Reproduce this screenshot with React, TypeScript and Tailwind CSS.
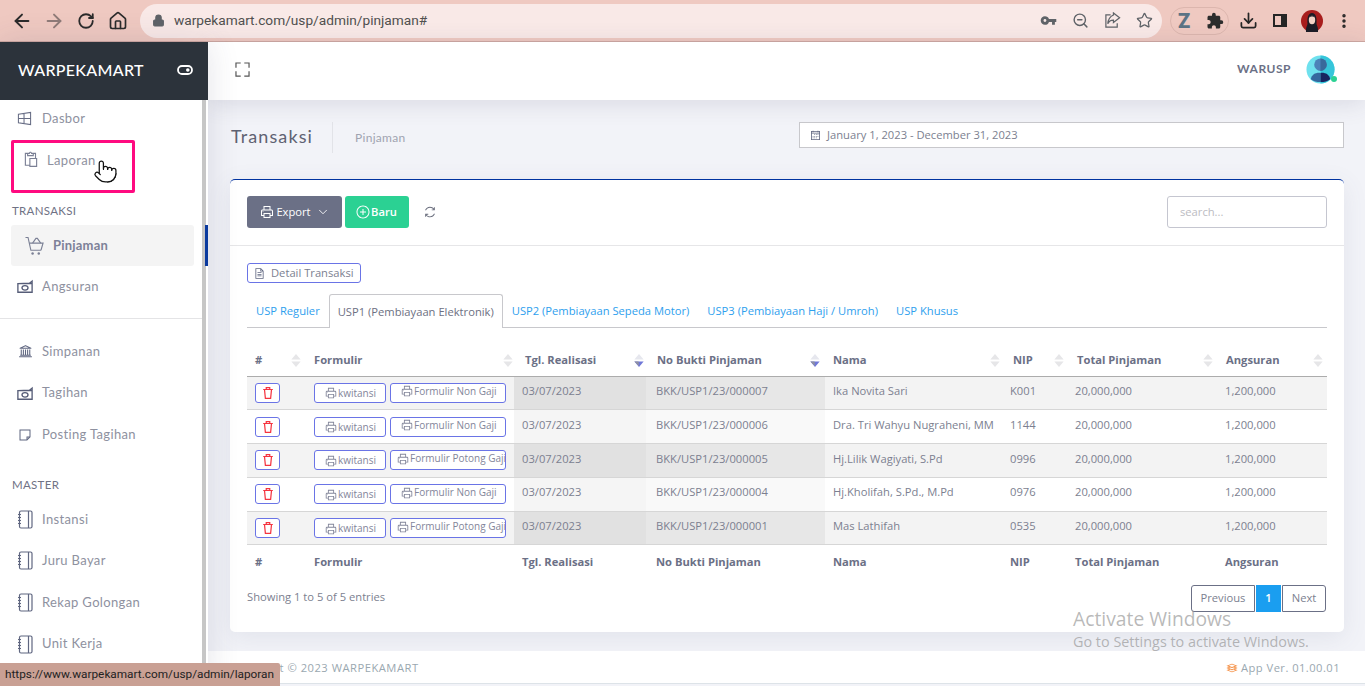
import type { ReactNode } from "react";
import { ArrowLeft, ArrowRight, RotateCw, Home, Lock, ZoomOut, Star, Download, EllipsisVertical, Pointer, ChevronDown } from "lucide-react";
import { MdExtension, MdVpnKey } from "react-icons/md";
import {
  LiaPrintSolid,
  LiaUniversitySolid,
  LiaStickyNote,
  LiaPasteSolid,
  LiaFileAlt,
  LiaPlusCircleSolid,
  LiaSyncSolid,
  LiaExpandSolid,
  LiaLayerGroupSolid,
  LiaCalendar,
} from "react-icons/lia";

const ROWS = [
  { form: "Formulir Non Gaji", bukti: "BKK/USP1/23/000007", nama: "Ika Novita Sari", nip: "K001" },
  { form: "Formulir Non Gaji", bukti: "BKK/USP1/23/000006", nama: "Dra. Tri Wahyu Nugraheni, MM", nip: "1144" },
  { form: "Formulir Potong Gaji", bukti: "BKK/USP1/23/000005", nama: "Hj.Lilik Wagiyati, S.Pd", nip: "0996" },
  { form: "Formulir Non Gaji", bukti: "BKK/USP1/23/000004", nama: "Hj.Kholifah, S.Pd., M.Pd", nip: "0976" },
  { form: "Formulir Potong Gaji", bukti: "BKK/USP1/23/000001", nama: "Mas Lathifah", nip: "0535" },
];

const HEADERS = [
  { label: "#", pad: "pl-2 pr-[5px]", active: false },
  { label: "Formulir", pad: "pl-2 pr-[1px]", active: false },
  { label: "Tgl. Realisasi", pad: "pl-[11px] pr-[2px]", active: true },
  { label: "No Bukti Pinjaman", pad: "pl-[11px] pr-[5px]", active: true },
  { label: "Nama", pad: "pl-2 pr-[2px]", active: false },
  { label: "NIP", pad: "pl-[11px] pr-[3px]", active: false },
  { label: "Total Pinjaman", pad: "pl-[10px] pr-[4px]", active: false },
  { label: "Angsuran", pad: "pl-[9px] pr-[4px]", active: false },
];

const TABS = [
  "USP Reguler",
  "USP1 (Pembiayaan Elektronik)",
  "USP2 (Pembiayaan Sepeda Motor)",
  "USP3 (Pembiayaan Haji / Umroh)",
  "USP Khusus",
];

function WindowIcon() {
  return (
    <svg viewBox="0 0 16 16" className="h-[15px] w-[15px]" fill="none" stroke="#666c84" strokeWidth="1.1">
      <path d="M1.500 3.500 14.500 1.500v13l-13-2zM1.500 8h13M7.500 2.600v10.800" />
    </svg>
  );
}

function MoneyIcon() {
  return (
    <svg viewBox="0 0 18 15" className="h-[15px] w-[16px]" fill="none" stroke="#565d78" strokeWidth="1.5">
      <path d="M1 4.200 14 3.800l3-2.300v2.700M1 4.200V14h16V4.200H1z" />
      <ellipse cx="9" cy="9" rx="3.400" ry="2.500" />
    </svg>
  );
}

function CartIcon() {
  return (
    <svg viewBox="0 0 20 20" className="h-[20px] w-[19px]" fill="none" stroke="#7b8095" strokeWidth="1.2">
      <path d="M.5 1h2.700l3 13.500h10.600" />
      <path d="M4.500 7H19l-2.200 7.500" />
      <path d="M8 7l3.500-5h1.500L16.500 7" />
      <circle cx="8" cy="18" r="1.300" fill="#7b8095" stroke="none" />
      <circle cx="14.500" cy="18" r="1.300" fill="#7b8095" stroke="none" />
    </svg>
  );
}

function NotebookIcon() {
  return (
    <svg viewBox="0 0 16 19" className="h-[19px] w-[16px]" fill="none" stroke="#5f6680" strokeWidth="1.2">
      <rect x="2.500" y="1" width="12.500" height="17" rx="1.500" />
      <path d="M11.500 1v17" />
      <path d="M1 4.500h3M1 7.500h3M1 10.500h3M1 13.500h3" />
    </svg>
  );
}

function TrashIcon() {
  return (
    <svg viewBox="0 0 16 16" className="h-[14px] w-[14px]" fill="none" stroke="#f5333f" strokeWidth="1.400">
      <path d="M2.500 4h11M6 4V1.800h4V4M4 4l1 10.200h6L12 4" />
    </svg>
  );
}

function SortIcon({ active }: { active: boolean }) {
  return (
    <svg viewBox="0 0 12 14" className="h-[13px] w-[12px] shrink-0">
      <path d="M6 0 11 6H1z" fill={active ? "#e6e7ee" : "#e6e6e8"} />
      <path d="M6 14 1 8h10z" fill={active ? "#7078d8" : "#e6e6e8"} />
      {active && <path d="M1 8h4.500L6 13z" fill="#8f919f" />}
    </svg>
  );
}

function ShareIcon() {
  return (
    <svg viewBox="0 0 18 18" className="h-[17px] w-[17px]" fill="none" stroke="#5f6368" strokeWidth="1.3">
      <path d="M7 3H2v13h12v-4M10 3.200V1l6.500 5-6.500 5V8.500C7 8.500 5 10 4 12.500 4.300 7.500 6.500 4.800 10 3.200z" />
    </svg>
  );
}

function ProfilePic() {
  return (
    <svg viewBox="0 0 22 22" className="h-[22px] w-[22px]">
      <circle cx="11" cy="11" r="11" fill="#a81d1d" />
      <path d="M5 22c-.5-4 1-6 1.500-8C6 8 7 3 11 3s5 5 4.500 11c.5 2 2 4 1.500 8z" fill="#1c1c26" />
      <ellipse cx="11" cy="10" rx="3.200" ry="4.200" fill="#f2d2c6" />
      <path d="M7.800 8c1-2 5.400-2 6.400 0-1-3.500-5.400-3.500-6.400 0z" fill="#1c1c26" />
    </svg>
  );
}

function Avatar() {
  return (
    <svg viewBox="0 0 30 30" className="h-[29px] w-[29px]">
      <circle cx="15" cy="15" r="14.500" fill="#6fe1ee" />
      <path d="M15 .5A14.500 14.500 0 0 1 29.500 15 14.500 14.500 0 0 1 15 29.500z" fill="#36c5da" />
      <circle cx="15" cy="10" r="6.500" fill="#4c82b8" />
      <path d="M15 3.500a6.500 6.500 0 0 1 0 13z" fill="#39699b" />
      <path d="M5 25c1-5 5-7 10-6.500V28C11 28 7.500 27 5 25z" fill="#35689e" />
      <path d="M25 25c-1-5-5-7-10-6.500V28c4 0 7.500-1 10-3z" fill="#18235f" />
    </svg>
  );
}

function NavItem({ icon, label, indent }: { icon: ReactNode; label: string; indent?: boolean }) {
  return (
    <a
      className={`flex h-[41.6px] items-center text-[13px] tracking-[0.35px] text-[#8e91a0] ${
        indent ? "pl-[22px]" : "pl-[17px]"
      }`}
    >
      <span className={`flex w-[25px] shrink-0 items-center ${indent ? "-translate-y-px" : ""}`}>{icon}</span>
      {label}
    </a>
  );
}

function Sidebar() {
  return (
    <aside className="relative z-20 flex w-[208px] shrink-0 flex-col bg-white font-['Lato',sans-serif] shadow-[0_0_30px_rgba(60,60,90,0.14)]">
      <div className="flex h-[58px] items-center justify-between bg-[#2c333b] pb-[3px] pl-[18px] pr-[15px] text-white">
        <span className="text-[16px] font-medium tracking-[0.3px]">WARPEKAMART</span>
        <svg viewBox="0 0 16 10" className="h-[10px] w-[16px]" fill="none" stroke="#fff" strokeWidth="1.800">
          <rect x="1" y="1" width="14" height="8" rx="4" />
          <circle cx="10.800" cy="5" r="1.800" fill="#fff" stroke="none" />
        </svg>
      </div>

      <div className="flex min-h-0 flex-1">
        <nav className="w-[202px] shrink-0 overflow-hidden">
          <div className="-mt-[2px]">
            <NavItem icon={<WindowIcon />} label="Dasbor" />
            <NavItem icon={<LiaPasteSolid size={18} color="#7b8095" />} label="Laporan" indent />
          </div>
          <div className="mt-[23px] pl-3 text-[11.5px] leading-[14px] tracking-[0.3px] text-[#6f7285]">TRANSAKSI</div>
          <div className="ml-[11px] mt-[7px] flex h-[41px] w-[183px] items-center rounded-[3px] bg-[#f4f4f4] pl-[14px] text-[13px] font-bold tracking-[0.2px] text-[#7d8198]">
            <span className="w-[28px] shrink-0">
              <CartIcon />
            </span>
            Pinjaman
          </div>
          <NavItem icon={<MoneyIcon />} label="Angsuran" />
          <div className="mt-[10px] h-px w-[208px] bg-[#e4e4e6]" />
          <div className="mt-[12px]">
            <NavItem icon={<LiaUniversitySolid size={17} color="#5f6680" />} label="Simpanan" />
            <NavItem icon={<MoneyIcon />} label="Tagihan" />
            <NavItem icon={<LiaStickyNote size={16} color="#5f6680" />} label="Posting Tagihan" />
          </div>
          <div className="mt-[22px] pl-3 text-[11.5px] leading-[14px] tracking-[0.3px] text-[#6f7285]">MASTER</div>
          <div className="mt-[7px]">
            {["Instansi", "Juru Bayar", "Rekap Golongan", "Unit Kerja"].map((m) => (
              <NavItem key={m} icon={<NotebookIcon />} label={m} />
            ))}
          </div>
        </nav>
        <div className="w-[4px] shrink-0 bg-[#c6c6c6]" />
        <div className="flex w-[2px] shrink-0 flex-col bg-white pt-[125px]">
          <div className="-ml-px h-[41px] w-[3px] bg-[#0b3a9e]" />
        </div>
      </div>
    </aside>
  );
}

function RowButton({ children, className }: { children: ReactNode; className: string }) {
  return (
    <button
      className={`flex h-[20px] items-center overflow-hidden whitespace-nowrap rounded-[3px] border border-[#6a74e6] bg-white text-[10px] text-[#83869a] ${className}`}
    >
      {children}
    </button>
  );
}

function DataTable() {
  return (
    <table className="mt-[17px] w-[1080px] table-fixed border-collapse text-[11.2px] text-[#7c7f90]">
      <colgroup>
        <col className="w-[59px]" />
        <col className="w-[208px]" />
        <col className="w-[132px]" />
        <col className="w-[179px]" />
        <col className="w-[177px]" />
        <col className="w-[65px]" />
        <col className="w-[150px]" />
        <col className="w-[110px]" />
      </colgroup>
      <thead>
        <tr className="h-[31px] border-b-[1.5px] border-[#acacac]">
          {HEADERS.map((h) => (
            <th key={h.label} className={`font-bold text-[#6b7086] ${h.pad}`}>
              <div className="-mr-[2px] flex items-center justify-between pr-[1px] text-left">
                <span>{h.label}</span>
                <SortIcon active={h.active} />
              </div>
            </th>
          ))}
        </tr>
      </thead>
      <tbody>
        {ROWS.map((r, i) => {
          const odd = i % 2 === 0;
          return (
            <tr key={r.bukti} className={`h-[33.8px] border-b border-[#d6d6d6] ${odd ? "bg-[#f3f3f3]" : "bg-white"}`}>
              <td className="pl-2 align-middle">
                <button className="flex h-[20px] w-[25px] items-center justify-center rounded-[3px] border border-[#6a74e6] bg-white">
                  <TrashIcon />
                </button>
              </td>
              <td className="pl-2 align-middle">
                <div className="flex gap-1">
                  <RowButton className="w-[72px] justify-center pt-px">
                    <LiaPrintSolid size={14} className="shrink-0" />
                    kwitansi
                  </RowButton>
                  <RowButton className={`w-[116px] pb-[3px] ${r.form === "Formulir Non Gaji" ? "pl-[9px]" : "pl-[5px]"}`}>
                    <LiaPrintSolid size={14} className="shrink-0" />
                    {r.form}
                  </RowButton>
                </div>
              </td>
              <td className={`pb-[3px] pl-2 ${odd ? "bg-[#e1e1e1]" : "bg-[#f5f5f5]"}`}>03/07/2023</td>
              <td className={`pb-[3px] pl-[10px] ${odd ? "bg-[#e7e7e7]" : "bg-[#f9f9f9]"}`}>{r.bukti}</td>
              <td className="whitespace-nowrap pb-[3px] pl-2">{r.nama}</td>
              <td className="pb-[3px] pl-2">{r.nip}</td>
              <td className="pb-[3px] pl-2">20,000,000</td>
              <td className="pb-[3px] pl-2">1,200,000</td>
            </tr>
          );
        })}
      </tbody>
      <tfoot>
        <tr className="h-[34px] text-left font-bold text-[#6b7086]">
          <th className="pl-2">#</th>
          <th className="pl-2">Formulir</th>
          <th className="pl-2">Tgl. Realisasi</th>
          <th className="pl-[10px]">No Bukti Pinjaman</th>
          <th className="pl-2">Nama</th>
          <th className="pl-2">NIP</th>
          <th className="pl-2">Total Pinjaman</th>
          <th className="pl-2">Angsuran</th>
        </tr>
      </tfoot>
    </table>
  );
}

function Card() {
  return (
    <section className="rounded-[5px] border-t border-[#0033a0] bg-white font-['Open_Sans',sans-serif] shadow-[0_6px_24px_rgba(90,95,130,0.1)]">
      <div className="flex h-[66px] items-center border-b border-[#e6e6e8] px-[17px] pb-[2px]">
        <button className="flex h-[32px] w-[95px] items-center justify-center gap-[1px] rounded-[3px] bg-[#6b7086] pt-px text-[11.2px] font-medium text-white">
          <LiaPrintSolid size={16} />
          Export
          <ChevronDown size={14} strokeWidth={1.5} className="ml-[4px]" />
        </button>
        <button className="ml-[3px] flex h-[32px] w-[64px] items-center justify-center rounded-[3px] bg-[#2bd193] pr-[2px] pt-px text-[11.2px] font-semibold text-white">
          <LiaPlusCircleSolid size={16} />
          Baru
        </button>
        <LiaSyncSolid size={14} color="#666a7a" className="ml-[14px]" />
        <input
          placeholder="search..."
          className="ml-auto h-[32px] w-[160px] rounded-[3px] border border-[#c5c6d0] px-3 text-[11.2px] outline-none placeholder:text-[#bcbcc2]"
        />
      </div>

      <div className="px-[17px] pb-5 pt-[17px]">
        <button className="flex h-[20px] w-[114px] items-center rounded-[3px] border border-[#6a74e6] pl-[5px] text-[11.2px] text-[#7c7f90]">
          <LiaFileAlt size={13} color="#5f6680" className="mr-[5px] shrink-0" />
          Detail Transaksi
        </button>

        <div className="mt-[11px] flex h-[34px] border-b border-[#c8c8cc] text-[11.2px]">
          {TABS.map((t, i) =>
            i === 1 ? (
              <span
                key={t}
                className="-mb-px flex w-[174px] items-center justify-center rounded-t-[3px] border border-b-0 border-[#c8c8cc] bg-white pt-px text-[#6d7082]"
              >
                {t}
              </span>
            ) : (
              <span key={t} className="flex items-center whitespace-nowrap px-[9px] pt-[2px] text-[#2ea0ee]">
                {t}
              </span>
            ),
          )}
        </div>

        <DataTable />

        <div className="mt-[6px] flex items-start justify-between pr-px text-[11.2px] text-[#7c7f90]">
          <span className="pt-[4px]">Showing 1 to 5 of 5 entries</span>
          <div className="flex h-[27px] gap-px">
            <span className="flex w-[64px] items-center justify-center rounded-l-[3px] border border-[#6b7086]">Previous</span>
            <span className="flex w-[25px] items-center justify-center bg-[#1a9ef0] font-semibold text-white">1</span>
            <span className="flex w-[44px] items-center justify-center rounded-r-[3px] border border-[#6b7086]">Next</span>
          </div>
        </div>
      </div>
    </section>
  );
}

function BrowserBar() {
  return (
    <div className="flex h-[42px] shrink-0 items-center border-b border-[#cfa9a2] bg-[#efc9c1] font-['Roboto',sans-serif]">
      <div className="flex w-[140px] shrink-0 items-center pl-[6px] text-[#2b2b2b]">
        <span className="flex w-[32px] justify-center">
          <ArrowLeft size={22} strokeWidth={2.1} />
        </span>
        <span className="flex w-[32px] justify-center text-[#8f7b78]">
          <ArrowRight size={22} strokeWidth={2.1} />
        </span>
        <span className="flex w-[32px] justify-center">
          <RotateCw size={18} strokeWidth={2.4} />
        </span>
        <span className="flex w-[32px] justify-center">
          <Home size={20} strokeWidth={2} />
        </span>
      </div>
      <div className="flex h-[34px] w-[1022px] shrink-0 items-center rounded-full bg-[#f9e9e7] pl-[12px] pr-[2px]">
        <Lock size={13} className="fill-[#5f6368] text-[#5f6368]" />
        <span className="ml-[9px] text-[13.7px] text-[#50504f]">warpekamart.com/usp/admin/pinjaman#</span>
        <div className="ml-auto flex items-center text-[#5f6368]">
          <span className="flex w-[32px] justify-center">
            <MdVpnKey size={17} />
          </span>
          <span className="flex w-[32px] justify-center">
            <ZoomOut size={17} />
          </span>
          <span className="flex w-[32px] justify-center">
            <ShareIcon />
          </span>
          <span className="flex w-[32px] justify-center">
            <Star size={17} strokeWidth={1.8} />
          </span>
        </div>
      </div>
      <div className="ml-[8px] flex h-[28px] w-[59px] shrink-0 items-center justify-between rounded-full border border-[#dcb6ae] pl-[7px] pr-[4px]">
        <span className="text-[20px] font-black leading-none text-[#5b7385]">Z</span>
        <MdExtension size={18} color="#2c2c2c" />
      </div>
      <div className="ml-[3px] flex items-center text-[#262626]">
        <span className="flex w-[32px] justify-center">
          <Download size={19} strokeWidth={2.2} />
        </span>
        <span className="flex w-[32px] justify-center">
          <span className="h-[13px] w-[14px] border-2 border-r-[6px] border-[#262626]" />
        </span>
        <span className="flex w-[32px] justify-center">
          <ProfilePic />
        </span>
        <span className="flex w-[32px] justify-center">
          <EllipsisVertical size={18} strokeWidth={2.6} />
        </span>
      </div>
    </div>
  );
}

export default function App() {
  return (
    <div className="relative flex h-[686px] w-[1365px] flex-col overflow-hidden bg-[#f2f3f8]">
      <BrowserBar />
      <div className="flex min-h-0 flex-1">
        <Sidebar />
        <main className="flex min-w-0 flex-1 flex-col">
          <header className="relative z-10 flex h-[58px] shrink-0 items-center bg-white pb-[4px] pl-[25px] pr-[30px] font-['Lato',sans-serif] shadow-[0_3px_24px_rgba(60,60,90,0.14)]">
            <LiaExpandSolid size={19} color="#555" />
            <span className="ml-auto text-[12px] font-bold tracking-[0.5px] text-[#6b7086]">WARUSP</span>
            <span className="relative ml-[15px] flex">
              <Avatar />
              <span className="absolute bottom-[2px] right-[-2px] h-[6px] w-[6px] rounded-full bg-[#2bd193]" />
            </span>
          </header>

          <div className="min-h-0 flex-1 pl-[22px] pr-[21px]">
            <div className="flex h-[79px] items-start pt-[22px] font-['Lato',sans-serif]">
              <h1 className="w-[101px] pl-px pt-[1px] text-[18px] tracking-[1.1px] text-[#5f6272]">Transaksi</h1>
              <span className="ml-px h-[31px] w-px bg-[#e2e3e8]" />
              <span className="ml-[22px] pt-[7px] text-[12px] tracking-[0.3px] text-[#a0a3b0]">Pinjaman</span>
              <div className="ml-auto flex h-[26px] w-[545px] items-center border border-[#c8c8cc] bg-white pl-[9px] font-['Open_Sans',sans-serif] text-[11.2px] text-[#7c7f90]">
                <LiaCalendar size={13} color="#5f6680" />
                <span className="ml-[5px]">January 1, 2023 - December 31, 2023</span>
              </div>
            </div>
            <Card />
          </div>

          <footer className="mb-[2px] flex h-[33px] shrink-0 items-center justify-between border-b border-[#dde3e8] bg-white pr-[25px] pt-[2px] font-['Open_Sans',sans-serif] text-[11.2px] tracking-[0.5px] text-[#9aa8b0]">
            <span className="pl-[21px]">Copyright © 2023 WARPEKAMART</span>
            <span className="flex items-center gap-[2px] tracking-[0.45px]">
              <LiaLayerGroupSolid size={14} color="#f5934a" />
              App Ver. 01.00.01
            </span>
          </footer>
        </main>
      </div>

      {/* things that sit on top of the page: annotation, cursor, status bubble, watermark */}
      <div className="absolute left-[11px] top-[140px] z-30 h-[53px] w-[124px] rounded-[2px] border-[3px] border-[#ff0a80]" />
      <Pointer size={25} strokeWidth={1.2} className="absolute left-[93px] top-[159px] z-30 fill-white text-[#111]" />
      <div className="absolute bottom-0 left-0 z-30 flex h-[23px] w-[280px] items-center rounded-tr-[2px] bg-[#c9a094] pl-[5px] font-['Roboto',sans-serif] text-[11.800px] text-[#222]">
        https://www.warpekamart.com/usp/admin/laporan
      </div>
      <div className="pointer-events-none absolute left-[1073px] top-[606px] z-30 font-['Open_Sans',sans-serif] text-[#8a8a8a]/60">
        <div className="text-[19.300px] leading-[26px]">Activate Windows</div>
        <div className="text-[14.400px] leading-[20px]">Go to Settings to activate Windows.</div>
      </div>
    </div>
  );
}
